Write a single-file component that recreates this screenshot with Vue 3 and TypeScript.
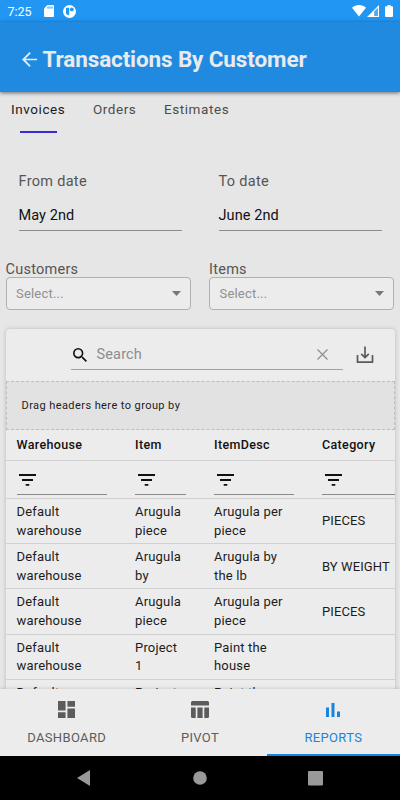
<script setup lang="ts">
interface Row {
  warehouse: string[]
  item: string[]
  desc: string[]
  category: string
}

const tabs: string[] = ['Invoices', 'Orders', 'Estimates']
const dates = [
  { label: 'From date', value: 'May 2nd' },
  { label: 'To date', value: 'June 2nd' },
]
const selects: string[] = ['Customers', 'Items']
const columns: string[] = ['Warehouse', 'Item', 'ItemDesc', 'Category']
const warehouse = ['Default', 'warehouse']
const rows: Row[] = [
  { warehouse, item: ['Arugula', 'piece'], desc: ['Arugula per', 'piece'], category: 'PIECES' },
  { warehouse, item: ['Arugula', 'by'], desc: ['Arugula by', 'the lb'], category: 'BY WEIGHT' },
  { warehouse, item: ['Arugula', 'piece'], desc: ['Arugula per', 'piece'], category: 'PIECES' },
  { warehouse, item: ['Project', '1'], desc: ['Paint the', 'house'], category: '' },
  { warehouse, item: ['Project', '1'], desc: ['Paint the', 'house'], category: '' },
]
</script>

<template>
  <div class="phone">
    <div class="status">
      <span class="clock">7:25</span>
      <svg class="sd" viewBox="0 0 10 12"><path fill="#fff" d="M3.4 0H9a1 1 0 0 1 1 1v10a1 1 0 0 1-1 1H1a1 1 0 0 1-1-1V3.5z" /><path stroke="#2196f3" stroke-width="1" d="M4 1.5v2.2M6 1.5v2.2M8 1.5v2.2" /></svg>
      <svg class="app" viewBox="0 0 13 13"><circle cx="6.5" cy="6.5" r="6.5" fill="#fff" /><path fill="#2196f3" d="M3 2.7h3.2v7.4H5.3A2.3 2.3 0 0 1 3 7.8z" /><circle cx="8.8" cy="4.4" r="1.9" fill="#2196f3" /></svg>
      <span class="grow"></span>
      <svg class="wifi" viewBox="0 0 14 12"><path fill="#fff" d="M0 2.8C4-.8 10-.8 14 2.8L7 11.6z" /></svg>
      <svg class="signal" viewBox="0 0 12 12"><path fill="#fff" fill-rule="evenodd" d="M12 0v12H0zM10.9 2.7 7.2 6.4v4.5h3.7z" /><path fill="#fff" fill-opacity=".2" d="M10.9 2.7 7.2 6.4v4.5h3.7z" /></svg>
      <svg class="battery" viewBox="0 0 8 12"><path fill="#fff" d="M2.4 0h3.2v1.2H7a1 1 0 0 1 1 1V11a1 1 0 0 1-1 1H1a1 1 0 0 1-1-1V2.2a1 1 0 0 1 1-1h1.4z" /></svg>
    </div>

    <header class="header">
      <svg class="back" viewBox="4 4 16 16"><path fill="#e9eaec" d="M20 11.100H7.700l5.700-5.700L12 4l-8 8 8 8 1.300-1.350-5.600-5.750H20z" /></svg>
      <h1>Transactions By Customer</h1>
    </header>

    <main class="content">
      <nav class="tabs">
        <span v-for="(t, i) in tabs" :key="t" class="tab" :class="{ active: i === 0 }">{{ t }}</span>
      </nav>

      <section class="dates">
        <div v-for="d in dates" :key="d.label" class="date">
          <label>{{ d.label }}</label>
          <div class="date-value">{{ d.value }}</div>
        </div>
      </section>

      <section class="selects">
        <div v-for="s in selects" :key="s" class="field">
          <label>{{ s }}</label>
          <div class="select">
            <span>Select...</span>
            <svg viewBox="0 0 9 5"><path fill="#777" d="M0 0h9L4.5 5z" /></svg>
          </div>
        </div>
      </section>

      <section class="card">
        <div class="toolbar">
          <div class="search">
            <svg class="lens" viewBox="3 3 17.5 17.5"><path fill="#111" d="M15.5 14h-.79l-.28-.27A6.47 6.47 0 0 0 16 9.5 6.5 6.5 0 1 0 9.5 16c1.61 0 3.09-.59 4.23-1.57l.27.28v.79l5 4.99L20.49 19zm-6 0C7.01 14 5 11.99 5 9.5S7.01 5 9.5 5 14 7.01 14 9.5 11.99 14 9.5 14" /></svg>
            <span>Search</span>
            <svg class="clear" viewBox="0 0 11 11"><path stroke="#8d8d8d" stroke-width="1.2" d="M.5.5l10 10M10.500.5l-10 10" /></svg>
          </div>
          <svg class="export" viewBox="0 0 18 18"><path fill="none" stroke="#5a5a5a" stroke-width="1.700" stroke-linejoin="round" d="M1.500 9v7.200h15V9M9 .5v11M5.200 7.800 9 11.600l3.800-3.800" /></svg>
        </div>
        <div class="group">Drag headers here to group by</div>
        <div class="table">
          <div class="row head">
            <div v-for="c in columns" :key="c" class="cell">{{ c }}</div>
          </div>
          <div class="row filters">
            <div v-for="c in columns" :key="c" class="cell">
              <div class="filter">
                <svg viewBox="0 0 17 12"><path fill="#111" d="M0 0h17v1.900H0zM3 5h11v1.900H3zM6.700 9.900h3.600v1.900H6.700z" /></svg>
              </div>
            </div>
          </div>
          <div v-for="(r, i) in rows" :key="i" class="row data">
            <div class="cell"><div v-for="l in r.warehouse" :key="l">{{ l }}</div></div>
            <div class="cell"><div v-for="l in r.item" :key="l">{{ l }}</div></div>
            <div class="cell"><div v-for="l in r.desc" :key="l">{{ l }}</div></div>
            <div class="cell category">{{ r.category }}</div>
          </div>
        </div>
      </section>
    </main>

    <nav class="bottom">
      <div class="item">
        <svg class="i-dash" viewBox="3 3 18 18"><path fill="currentColor" d="M3 13h8V3H3zm0 8h8v-6H3zm10 0h8V11h-8zm0-18v6h8V3z" /></svg>
        <span>DASHBOARD</span>
      </div>
      <div class="item">
        <svg class="i-pivot" viewBox="0 0 18 17"><path fill="currentColor" d="M0 4.600V1.500A1.500 1.500 0 0 1 1.500 0h15A1.500 1.500 0 0 1 18 1.500v3.100zM0 6.400h4.700V17H1.500A1.500 1.500 0 0 1 0 15.500zM6.400 6.400h5.200V17H6.400zM13.300 6.400H18v9.100a1.500 1.500 0 0 1-1.500 1.500h-3.200z" /></svg>
        <span>PIVOT</span>
      </div>
      <div class="item active">
        <svg class="i-rep" viewBox="0 0 14 14"><path fill="currentColor" d="M0 4.600h3V14H0zM5.500 0h3v14h-3zM11 8.400h3V14h-3z" /></svg>
        <span>REPORTS</span>
      </div>
    </nav>

    <div class="system">
      <svg class="s-back" viewBox="0 0 14 16"><path fill="#999" d="M13 0v16L0 8z" /></svg>
      <svg class="s-home" viewBox="0 0 14 14"><circle cx="7" cy="7" r="6.800" fill="#999" /></svg>
      <svg class="s-recent" viewBox="0 0 15 15"><rect width="15" height="14.500" rx="1" fill="#999" /></svg>
    </div>
  </div>
</template>

<style>
body {
  background: #e6e6e6;
}
</style>

<style scoped>
.phone {
  width: 400px;
  height: 800px;
  overflow: hidden;
  display: flex;
  flex-direction: column;
  background: #e6e6e6;
  font-family: Roboto, "Liberation Sans", sans-serif;
  color: #1c1c1c;
}
* {
  box-sizing: border-box;
}
svg {
  display: block;
  flex: none;
}
.status {
  flex: none;
  height: 22px;
  background: #2196f3;
  display: flex;
  align-items: center;
  padding: 0 7px 0 7.500px;
}
.clock {
  color: #fff;
  font-size: 12.500px;
  width: 36px;
}
.sd {
  width: 10px;
  height: 12px;
  margin-right: 9px;
}
.app {
  width: 13px;
  height: 13px;
}
.grow {
  flex: 1;
}
.wifi {
  width: 14px;
  height: 12px;
  margin-right: 1px;
}
.signal {
  width: 12px;
  height: 12px;
  margin-right: 6px;
}
.battery {
  width: 8px;
  height: 12px;
}
.header {
  flex: none;
  height: 70px;
  background: #1f8ae0;
  display: flex;
  align-items: center;
  padding: 4px 0 0 21.500px;
  gap: 6px;
  box-shadow: 0 1px 4px rgba(0, 0, 0, 0.55);
  z-index: 1;
}
.back {
  width: 15px;
  height: 15px;
}
h1 {
  margin: 0;
  font-size: 22.500px;
  line-height: 28px;
  font-weight: 700;
  letter-spacing: -0.13px;
  color: #e9eaec;
  white-space: nowrap;
}
.content {
  flex: 1;
  min-height: 0;
  overflow: hidden;
}
.tabs {
  display: flex;
  height: 41px;
  padding: 7px 0 0 11px;
  gap: 27.500px;
  font-size: 13.500px;
  line-height: 20px;
  letter-spacing: 0.58px;
  color: #4c4c4c;
}
.tab {
  height: 34px;
  display: flex;
  flex-direction: column;
  align-items: center;
}
.tab.active {
  color: #1c1c1c;
}
.tab.active::after {
  content: "";
  width: 37px;
  height: 1.500px;
  margin-top: 12px;
  background: #3b2bd4;
}
.dates {
  display: grid;
  grid-template-columns: 1fr 1fr;
  gap: 37px;
  padding: 38px 18.500px 0;
}
.date label,
.field label {
  display: block;
  font-size: 14.500px;
  line-height: 20px;
  letter-spacing: 0.3px;
  color: #555;
}
.date label {
  padding-top: 1px;
  height: 20px;
}
.date-value {
  margin-top: 14px;
  height: 26px;
  font-size: 14.500px;
  line-height: 22px;
  letter-spacing: 0.08px;
  color: #111;
  border-bottom: 1px solid #8c8c8c;
}
.selects {
  display: grid;
  grid-template-columns: 185px 185px;
  gap: 18.500px;
  padding: 30px 5.500px 0;
}
.field label {
  line-height: 18px;
  height: 16px;
  letter-spacing: 0.25px;
}
.select {
  height: 33px;
  border: 1px solid #b0b0b0;
  border-radius: 4px;
  background: #ececec;
  display: flex;
  align-items: center;
  justify-content: space-between;
  padding: 0 9px 0 9.500px;
  font-size: 13px;
  letter-spacing: 0.2px;
  color: #909090;
}
.select svg {
  width: 9px;
  height: 5px;
}
.card {
  margin: 19px 5.500px 0;
  height: 420px;
  background: #ececec;
  border-radius: 4px;
  overflow: hidden;
  box-shadow: 0 0 4px rgba(0, 0, 0, 0.2);
}
.toolbar {
  height: 52px;
  display: flex;
  align-items: flex-start;
  padding: 11px 21px 0 65px;
  justify-content: space-between;
}
.search {
  width: 272px;
  height: 30px;
  border-bottom: 1px solid #a2a2a2;
  display: flex;
  align-items: center;
  padding: 0 15px 0 2px;
  font-size: 14.500px;
  letter-spacing: 0.15px;
  color: #8d8d8d;
}
.lens {
  width: 14px;
  height: 14px;
  margin-right: 10px;
}
.clear {
  width: 11px;
  height: 11px;
  margin-left: auto;
}
.export {
  width: 18px;
  height: 18px;
  margin-top: 6px;
}
.group {
  height: 49px;
  background: #e2e2e2;
  border: 1px dashed #bdbdbd;
  padding-left: 15px;
  font-size: 11px;
  line-height: 48px;
  letter-spacing: 0.42px;
}
.row {
  display: grid;
  grid-template-columns: 118.500px 79px 108px 120px;
  border-bottom: 1px solid #d0d0d0;
}
.cell {
  padding: 0 17px 0 11px;
  white-space: nowrap;
}
.head {
  height: 31px;
  font-size: 12.500px;
  font-weight: 500;
  line-height: 30px;
  letter-spacing: 0.35px;
  color: #111;
}
.filters {
  height: 38px;
}
.filter {
  height: 34px;
  border-bottom: 1px solid #8a8a8a;
  padding: 13px 0 0 2.500px;
}
.filter svg {
  width: 17px;
  height: 12px;
}
.data {
  height: 45.200px;
  align-items: center;
  padding-top: 1px;
  font-size: 13px;
  line-height: 18.500px;
  letter-spacing: 0.18px;
}
.category {
  letter-spacing: 0.1px;
}
.bottom {
  flex: none;
  height: 67px;
  display: grid;
  grid-template-columns: 1fr 1fr 1fr;
  background: #ececec;
  box-shadow: 0 -1px 3px rgba(0, 0, 0, 0.12);
  z-index: 1;
}
.item {
  display: flex;
  flex-direction: column;
  align-items: center;
  justify-content: space-between;
  padding: 12px 0 8px;
  font-size: 13px;
  line-height: 20px;
  letter-spacing: 0.35px;
  color: #5c5c5c;
}
.item.active {
  color: #1a84dc;
  border-bottom: 2px solid #1a84dc;
  padding: 14px 0 6px;
}
.i-dash {
  width: 17px;
  height: 17px;
}
.i-pivot {
  width: 18px;
  height: 17px;
}
.i-rep {
  width: 14px;
  height: 14px;
}
.system {
  flex: none;
  height: 44px;
  background: #000;
  display: flex;
  align-items: center;
  justify-content: space-between;
  padding: 0 77px;
}
.s-back {
  width: 14px;
  height: 16px;
}
.s-home {
  width: 14px;
  height: 14px;
}
.s-recent {
  width: 15px;
  height: 15px;
}
</style>
